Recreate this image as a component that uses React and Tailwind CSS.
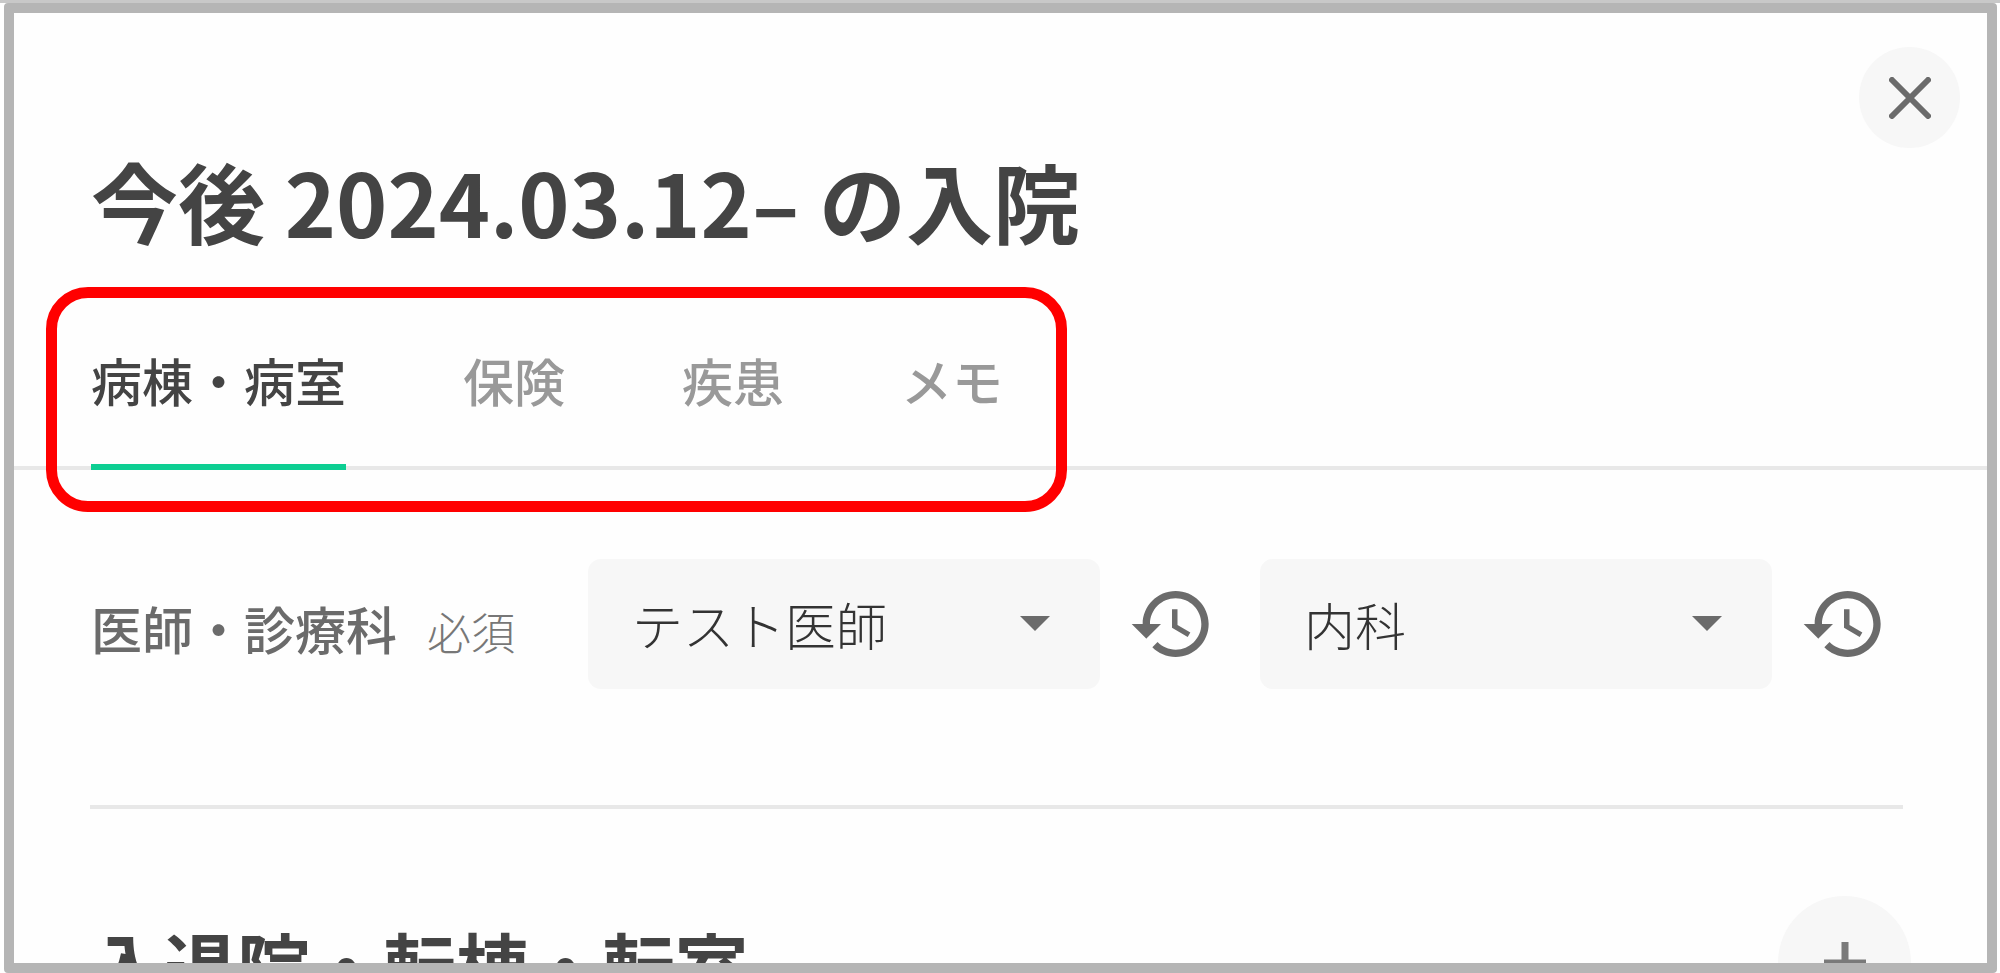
import { useState } from 'react';

const TABS = ['病棟・病室', '保険', '疾患', 'メモ'];

function CloseIcon() {
  return (
    <svg viewBox="0 0 42 42" className="size-[42px]" fill="none" stroke="#6b6b6b" strokeWidth="6" strokeLinecap="round" aria-hidden="true">
      <path d="M3 3l36 36M39 3L3 39" />
    </svg>
  );
}

function PlusIcon() {
  return (
    <svg viewBox="0 0 42 42" className="size-[42px]" fill="none" stroke="#7a7a7a" strokeWidth="7" aria-hidden="true">
      <path d="M21 0v42M0 21h42" />
    </svg>
  );
}

function HistoryIcon() {
  return (
    <svg viewBox="0 0 24 24" className="size-[88px]" fill="#6b6b6b" aria-hidden="true">
      <path d="M13 3c-4.97 0-9 4.03-9 9H1l3.89 3.89.07.14L9 12H6c0-3.87 3.13-7 7-7s7 3.13 7 7-3.13 7-7 7c-1.93 0-3.68-.79-4.94-2.06l-1.42 1.42C8.27 19.99 10.51 21 13 21c4.97 0 9-4.03 9-9s-4.03-9-9-9zm-1 5v5l4.28 2.54.72-1.21-3.5-2.08V8H12z" />
    </svg>
  );
}

function SelectWithHistory({ label, options }) {
  return (
    <div className="flex flex-1 items-center gap-[28px]">
      <div className="relative flex-1">
        <select
          aria-label={label}
          className="h-[130px] w-full appearance-none rounded-[13px] bg-[#f7f7f7] pr-24 pl-[44px] text-[51px] font-light text-[#333333]"
        >
          {options.map((o) => (
            <option key={o}>{o}</option>
          ))}
        </select>
        <svg viewBox="0 0 30 15" className="pointer-events-none absolute top-[57px] right-[50px] h-[15px] w-[30px]" fill="#6b6b6b" aria-hidden="true">
          <path d="M0 0h30L15 15z" />
        </svg>
      </div>
      <button type="button" aria-label={`${label}の履歴`} className="shrink-0">
        <HistoryIcon />
      </button>
    </div>
  );
}

export default function App() {
  const [active, setActive] = useState(0);

  return (
    <div className="h-screen overflow-hidden border-t-[3px] border-[#c8c8c8] bg-white pr-[3px] pl-1 font-['Noto_Sans_CJK_JP',sans-serif] text-[#444444]">
      <main className="relative h-full overflow-hidden rounded-[4px] border-[10px] border-[#b5b5b5] bg-[#fefefe]">
        <div className="flex justify-end pt-[34px] pr-[27px]">
          <button type="button" aria-label="閉じる" className="flex size-[101px] items-center justify-center rounded-full bg-[#f7f7f7]">
            <CloseIcon />
          </button>
        </div>

        <h1 className="px-[77px] text-[87px] leading-[104px] font-bold">今後 2024.03.12– の入院</h1>

        <div role="tablist" className="mt-[44px] flex gap-[117px] border-b-4 border-[#e8e8e8] px-[77px]">
          {TABS.map((tab, i) => (
            <button
              key={tab}
              type="button"
              role="tab"
              aria-selected={i === active}
              onClick={() => setActive(i)}
              className={
                i === active
                  ? '-mb-1 h-[174px] border-b-[6px] border-[#0cce92] text-[51px] font-medium'
                  : '-mb-1 h-[174px] border-b-[6px] border-transparent text-[51px] font-medium text-[#999999]'
              }
            >
              {tab}
            </button>
          ))}
        </div>
        <div className="pointer-events-none absolute top-[274px] left-[32px] h-[225px] w-[1021px] rounded-[42px] border-[11px] border-[#ff0000]" />

        <section className="mr-[84px] ml-[76px] flex items-center border-b-4 border-[#e8e8e8] pt-[89px] pb-[116px]">
          <div className="mr-[73px] flex items-baseline gap-[30px] pt-2 pl-px">
            <span className="text-[51px] font-medium text-[#6b6b6b]">医師・診療科</span>
            <span className="text-[44px] font-light text-[#777777]">必須</span>
          </div>
          <div className="flex flex-1 gap-[44px] pr-[15px]">
            <SelectWithHistory label="医師" options={['テスト医師']} />
            <SelectWithHistory label="診療科" options={['内科']} />
          </div>
        </section>

        <section className="flex items-center justify-between pt-[87px] pr-[76px] pl-[77px]">
          <h2 className="text-[73px] leading-[110px] font-bold">入退院・転棟・転室</h2>
          <button type="button" aria-label="追加" className="flex size-[133px] items-center justify-center rounded-full bg-[#f7f7f7]">
            <PlusIcon />
          </button>
        </section>
      </main>
    </div>
  );
}
